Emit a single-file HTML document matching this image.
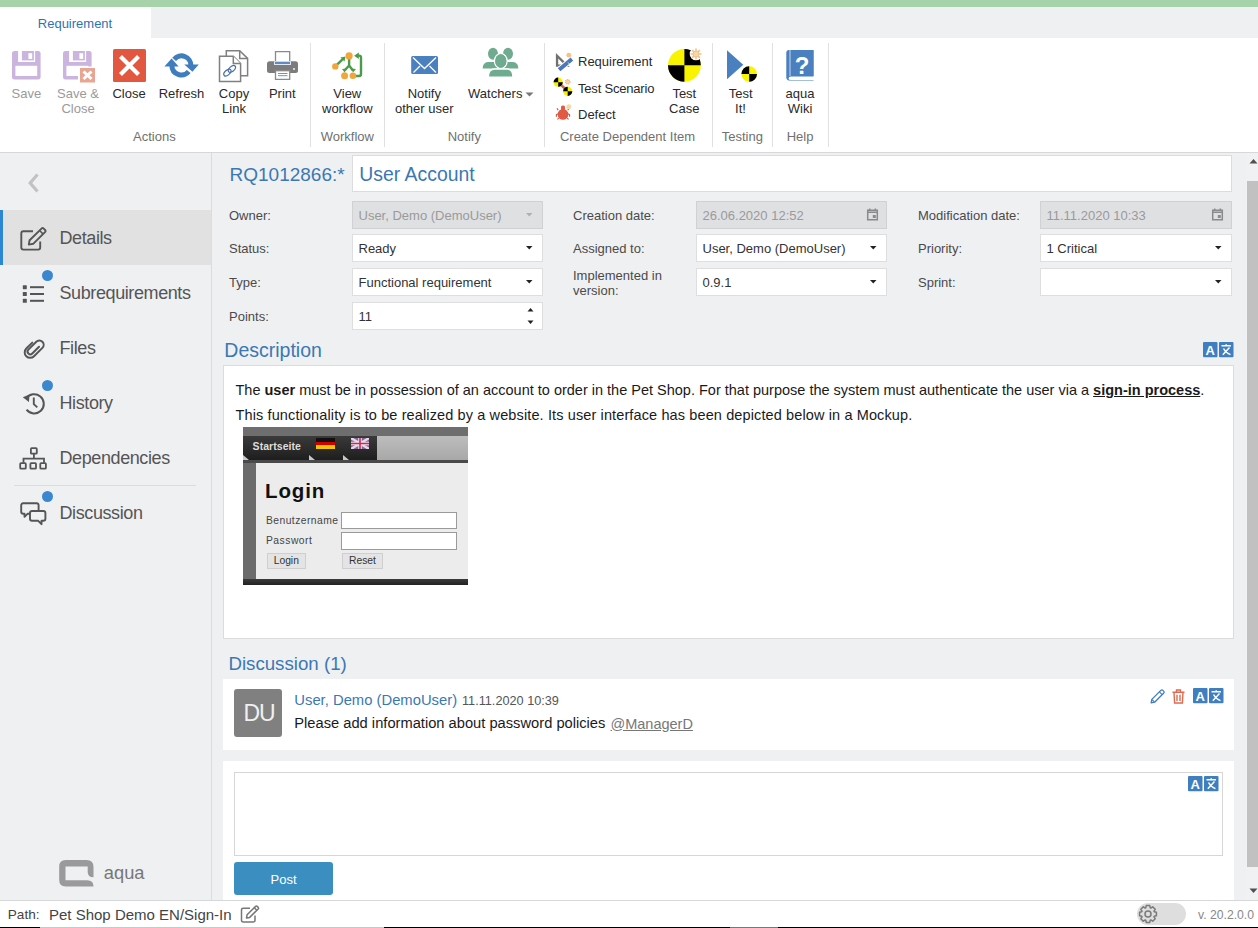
<!DOCTYPE html>
<html><head><meta charset="utf-8"><style>
html,body{margin:0;padding:0;width:1258px;height:928px;overflow:hidden;background:#fff;}
body{position:relative;font-family:"Liberation Sans", sans-serif;}
.t{position:absolute;white-space:nowrap;line-height:1;}
.b{position:absolute;}
</style></head><body>
<div class="b" style="left:0px;top:0px;width:1258px;height:7px;background:#a6d3a9;"></div>
<div class="b" style="left:0px;top:7px;width:1258px;height:31px;background:#eff0f2;"></div>
<div class="b" style="left:0px;top:7px;width:151px;height:31px;background:#ffffff;"></div>
<div class="t" style="top:17.00px;font-size:13px;color:#2f72b0;left:-75.00px;width:300px;text-align:center;">Requirement</div>
<div class="b" style="left:0px;top:38px;width:1258px;height:114px;background:#ffffff;"></div>
<div class="b" style="left:0px;top:152px;width:1258px;height:1px;background:#d6d7d9;"></div>
<div class="b" style="left:310px;top:43px;width:1px;height:104px;background:#e1e1e1;"></div>
<div class="b" style="left:384px;top:43px;width:1px;height:104px;background:#e1e1e1;"></div>
<div class="b" style="left:544px;top:43px;width:1px;height:104px;background:#e1e1e1;"></div>
<div class="b" style="left:712px;top:43px;width:1px;height:104px;background:#e1e1e1;"></div>
<div class="b" style="left:772px;top:43px;width:1px;height:104px;background:#e1e1e1;"></div>
<div class="b" style="left:828px;top:43px;width:1px;height:104px;background:#e1e1e1;"></div>
<div class="t" style="top:86.80px;font-size:13px;color:#9a9a9a;left:-123.60px;width:300px;text-align:center;">Save</div>
<div class="t" style="top:86.80px;font-size:13px;color:#9a9a9a;left:-72.00px;width:300px;text-align:center;">Save &amp;</div>
<div class="t" style="top:101.50px;font-size:13px;color:#9a9a9a;left:-72.00px;width:300px;text-align:center;">Close</div>
<div class="t" style="top:86.80px;font-size:13px;color:#2a2a2a;left:-21.00px;width:300px;text-align:center;">Close</div>
<div class="t" style="top:86.80px;font-size:13px;color:#2a2a2a;left:31.50px;width:300px;text-align:center;">Refresh</div>
<div class="t" style="top:86.80px;font-size:13px;color:#2a2a2a;left:84.00px;width:300px;text-align:center;">Copy</div>
<div class="t" style="top:101.50px;font-size:13px;color:#2a2a2a;left:84.00px;width:300px;text-align:center;">Link</div>
<div class="t" style="top:86.80px;font-size:13px;color:#2a2a2a;left:132.30px;width:300px;text-align:center;">Print</div>
<div class="t" style="top:86.80px;font-size:13px;color:#2a2a2a;left:197.30px;width:300px;text-align:center;">View</div>
<div class="t" style="top:101.50px;font-size:13px;color:#2a2a2a;left:197.30px;width:300px;text-align:center;">workflow</div>
<div class="t" style="top:86.80px;font-size:13px;color:#2a2a2a;left:274.30px;width:300px;text-align:center;">Notify</div>
<div class="t" style="top:101.50px;font-size:13px;color:#2a2a2a;left:274.30px;width:300px;text-align:center;">other user</div>
<div class="t" style="top:86.80px;font-size:13px;color:#2a2a2a;left:468.00px;">Watchers</div>
<div class="t" style="top:54.80px;font-size:13px;color:#2a2a2a;left:578.00px;">Requirement</div>
<div class="t" style="top:81.50px;font-size:13px;color:#2a2a2a;letter-spacing:-0.2px;left:578.00px;">Test Scenario</div>
<div class="t" style="top:107.70px;font-size:13px;color:#2a2a2a;left:578.00px;">Defect</div>
<div class="t" style="top:86.80px;font-size:13px;color:#2a2a2a;left:534.30px;width:300px;text-align:center;">Test</div>
<div class="t" style="top:101.50px;font-size:13px;color:#2a2a2a;left:534.30px;width:300px;text-align:center;">Case</div>
<div class="t" style="top:86.80px;font-size:13px;color:#2a2a2a;left:590.70px;width:300px;text-align:center;">Test</div>
<div class="t" style="top:101.50px;font-size:13px;color:#2a2a2a;left:590.50px;width:300px;text-align:center;">It!</div>
<div class="t" style="top:86.80px;font-size:13px;color:#2a2a2a;left:650.00px;width:300px;text-align:center;">aqua</div>
<div class="t" style="top:101.50px;font-size:13px;color:#2a2a2a;left:650.00px;width:300px;text-align:center;">Wiki</div>
<div class="t" style="top:129.50px;font-size:13px;color:#707070;left:4.40px;width:300px;text-align:center;">Actions</div>
<div class="t" style="top:129.50px;font-size:13px;color:#707070;left:197.30px;width:300px;text-align:center;">Workflow</div>
<div class="t" style="top:129.50px;font-size:13px;color:#707070;left:314.30px;width:300px;text-align:center;">Notify</div>
<div class="t" style="top:129.50px;font-size:13px;color:#707070;left:477.50px;width:300px;text-align:center;">Create Dependent Item</div>
<div class="t" style="top:129.50px;font-size:13px;color:#707070;left:592.30px;width:300px;text-align:center;">Testing</div>
<div class="t" style="top:129.50px;font-size:13px;color:#707070;left:650.00px;width:300px;text-align:center;">Help</div>
<svg class="b" style="left:12px;top:51px;" width="29" height="29" viewBox="0 0 29 29"><rect x="0" y="0" width="28.6" height="28.6" rx="2.5" fill="#cbb4de"/><rect x="6.1" y="0" width="17" height="11" fill="#fff"/><rect x="9.9" y="0" width="12" height="9.4" fill="#cbb4de"/><rect x="16.4" y="2.2" width="3.8" height="5.7" fill="#fff"/><rect x="3.4" y="14.8" width="21.8" height="10.2" fill="#fff"/></svg>
<svg class="b" style="left:63px;top:51px;" width="33" height="32" viewBox="0 0 33 32"><rect x="0" y="0" width="28.6" height="28.6" rx="2.5" fill="#cbb4de"/><rect x="6.1" y="0" width="17" height="11" fill="#fff"/><rect x="9.9" y="0" width="12" height="9.4" fill="#cbb4de"/><rect x="16.4" y="2.2" width="3.8" height="5.7" fill="#fff"/><rect x="3.4" y="14.8" width="21.8" height="10.2" fill="#fff"/><rect x="15" y="15.5" width="18" height="17" fill="#fff"/><rect x="17" y="17" width="15" height="14.5" fill="#e9a592"/><path d="M20.5 20.5L28.5 28M28.5 20.5L20.5 28" stroke="#fff" stroke-width="3"/></svg>
<svg class="b" style="left:113px;top:49px;" width="33" height="33" viewBox="0 0 33 33"><rect x="0" y="0" width="33" height="33" rx="1.5" fill="#e2573f"/><path d="M7.5 7.5L25.5 25.5M25.5 7.5L7.5 25.5" stroke="#fff" stroke-width="4.2"/></svg>
<svg class="b" style="left:164px;top:53px;" width="35" height="25" viewBox="0 0 35 25"><path d="M10.1 6.3 A9.5 9.5 0 0 1 26.9 12.6" fill="none" stroke="#3f7dbf" stroke-width="5"/><path d="M20.3 11.6H34.8L28.4 18.8Z" fill="#3f7dbf"/><path d="M24.7 18.5 A9.5 9.5 0 0 1 7.9 12.4" fill="none" stroke="#3f7dbf" stroke-width="5"/><path d="M0.4 13.5H14.6L7.6 5.6Z" fill="#3f7dbf"/></svg>
<svg class="b" style="left:218px;top:50px;" width="31" height="33" viewBox="0 0 31 33"><path d="M8.3 0.75H21.7L29.6 8.4V25.7H8.3Z" fill="#fff" stroke="#808080" stroke-width="1.5"/><path d="M21.7 0.75V8.4H29.6" fill="none" stroke="#808080" stroke-width="1.5"/><path d="M1.5 6.3H15.3L22.6 13.5V31.4H1.5Z" fill="#fff" stroke="#808080" stroke-width="1.5"/><path d="M15.3 6.3V13.5H22.6" fill="#fff" stroke="#808080" stroke-width="1.5"/><g fill="none" stroke="#4a6fa8" stroke-width="1.2"><ellipse cx="9.4" cy="22.6" rx="4.3" ry="2.4" transform="rotate(-42 9.4 22.6)"/><ellipse cx="13.9" cy="18.9" rx="4.3" ry="2.4" transform="rotate(-42 13.9 18.9)"/></g></svg>
<svg class="b" style="left:267px;top:51px;" width="31" height="29" viewBox="0 0 31 29"><rect x="8.5" y="0.6" width="14.2" height="11.5" fill="#fff" stroke="#8a8a8a" stroke-width="1.3"/><rect x="0" y="10.2" width="31" height="11.8" rx="2.5" fill="#7c7c7c"/><rect x="7" y="10.2" width="17" height="3.8" fill="#dfe8f3"/><rect x="8" y="11.2" width="15" height="1.6" fill="#3f75b5"/><circle cx="27" cy="18" r="0.9" fill="#fff"/><rect x="8.5" y="19.7" width="14.2" height="8.7" fill="#fff" stroke="#8a8a8a" stroke-width="1.3"/><path d="M11 22.5H20.5M11 24.7H20.5" stroke="#6b93c8" stroke-width="1"/></svg>
<svg class="b" style="left:330px;top:51px;" width="34" height="30" viewBox="0 0 34 30"><g stroke="#4c9a4c" stroke-width="2.4" fill="none"><path d="M5.3 15.4L13 7.8"/><path d="M19.1 8V14.5L14.6 19.5M19.1 14.5L22.9 19.5"/><path d="M27 4.6H29Q31 4.6 31 6.6V23Q31 25 29 25H25"/></g><g fill="#4c9a4c"><path d="M10.5 6.5L15.5 5.5L14.5 10.5Z"/><path d="M12 18L16.8 17.5L14.6 21.5Z"/><path d="M21.2 17.5L26 18L23 21.5Z"/><path d="M24.1 4.8L28.8 1.6V8Z"/></g><g fill="#f2a53a"><circle cx="19.1" cy="4.9" r="3.6"/><circle cx="5.3" cy="15.4" r="3.2"/><circle cx="14.6" cy="24.7" r="3.5"/><circle cx="22.9" cy="24.7" r="3.3"/></g></svg>
<svg class="b" style="left:411px;top:55px;" width="28" height="20" viewBox="0 0 28 20"><rect x="0.2" y="0.9" width="26.8" height="18.1" rx="1.5" fill="#4a7fc0"/><path d="M2 2.5L13.5 13.5L25 2.5M2.5 17.5L9 11M25 17.5L18.5 11" fill="none" stroke="#fff" stroke-width="1.3"/></svg>
<svg class="b" style="left:482px;top:47px;" width="37" height="31" viewBox="0 0 37 31"><g fill="#6fab8f"><ellipse cx="11" cy="6.8" rx="5" ry="6"/><ellipse cx="26" cy="6.8" rx="5" ry="6"/><path d="M0.7 21.5Q0.7 15.5 6 15H16Q19 15.5 19 21.5Z"/><path d="M18 21.5Q18 15.5 21 15H31Q36.3 15.5 36.3 21.5Z"/></g><g fill="#6fab8f" stroke="#fff" stroke-width="1.4"><ellipse cx="18.8" cy="14" rx="6.3" ry="7.4"/><path d="M6.3 30.3Q6.3 22.5 12 22H25.5Q31 22.5 31 30.3Z"/></g><ellipse cx="18.8" cy="14" rx="5.6" ry="6.7" fill="#6fab8f"/></svg>
<svg class="b" style="left:525px;top:92px;" width="9" height="5" viewBox="0 0 9 5"><path d="M0.5 0.5H8.5L4.5 4.5Z" fill="#777"/></svg>
<svg class="b" style="left:555px;top:52px;" width="18" height="19" viewBox="0 0 18 19"><path d="M0.9 1.1V14.8H14.8Z M3.2 6.6V12.6H9.2Z" fill="#707070" fill-rule="evenodd"/><path d="M4.1 17.7L16.9 7.1" stroke="#fff" stroke-width="6"/><path d="M4.1 17.7L16.9 7.1" stroke="#4a78b8" stroke-width="4"/><path d="M13 10.4L14.4 12" stroke="#cfe0f2" stroke-width="1"/><circle cx="13.8" cy="3.2" r="2.4" fill="#f5c282"/></svg>
<svg class="b" style="left:553px;top:77px;" width="20" height="20" viewBox="0 0 20 20"><path d="M6.5 6.5L14 13.5" stroke="#d96060" stroke-width="2.5"/><g><circle cx="5.2" cy="5.2" r="4.6" fill="#f5f000"/><path d="M5.2 5.2V0.6A4.6 4.6 0 0 0 0.6 5.2Z M5.2 5.2V9.8A4.6 4.6 0 0 0 9.8 5.2Z" fill="#000"/></g><g><circle cx="14.7" cy="14.3" r="4.6" fill="#f5f000"/><path d="M14.7 14.3V9.7A4.6 4.6 0 0 0 10.1 14.3Z M14.7 14.3V18.9A4.6 4.6 0 0 0 19.3 14.3Z" fill="#000"/></g><circle cx="14.7" cy="4.8" r="2.2" fill="#f7d7a8" stroke="#f2b070" stroke-width="1.3" stroke-dasharray="1 0.7"/></svg>
<svg class="b" style="left:554px;top:104px;" width="18" height="17" viewBox="0 0 18 17"><g fill="#e05a44"><ellipse cx="9" cy="10.4" rx="5.3" ry="5.4"/><rect x="7" y="1.6" width="4" height="5" rx="1.5"/></g><g stroke="#c05040" stroke-width="1.1" fill="none"><path d="M4.2 6.2L3 4.2M13.8 6.2L15 4.2M3.8 9.8L2.4 10.8V12.8M14.2 9.8L15.6 10.8V12.8M4.6 14L3.6 15.5M13.4 14L14.4 15.5"/></g><circle cx="14.8" cy="2.8" r="2.5" fill="#f7d8a8"/></svg>
<svg class="b" style="left:667px;top:48px;" width="36" height="35" viewBox="0 0 36 35"><circle cx="17.4" cy="17.3" r="16.4" fill="#f8f400"/><path d="M17.4 17.3V0.9A16.4 16.4 0 0 1 33.8 17.3Z M17.4 17.3V33.7A16.4 16.4 0 0 1 1 17.3Z" fill="#000"/><circle cx="29" cy="6" r="6.3" fill="#fff"/><g stroke="#f2c28a" stroke-width="1.6"><path d="M29 0.5V11.5M23.5 6H34.5M25.1 2.1L32.9 9.9M32.9 2.1L25.1 9.9"/></g><circle cx="29" cy="6" r="3" fill="#f7d5a8" stroke="#f2c28a" stroke-width="1"/></svg>
<svg class="b" style="left:726px;top:50px;" width="32" height="33" viewBox="0 0 32 33"><path d="M1 0.3L17.3 14.8L1 29.3Z" fill="#4a7fc0"/><circle cx="23.2" cy="24" r="7.8" fill="#f8f400"/><path d="M23.2 24V16.2A7.8 7.8 0 0 0 15.4 24Z M23.2 24V31.8A7.8 7.8 0 0 0 31 24Z" fill="#000"/></svg>
<svg class="b" style="left:786px;top:49px;" width="28" height="32" viewBox="0 0 28 32"><path d="M2.5 1H27.5V27.5H5Q2.5 27.5 2.5 29.5Q2.5 31 5 31H27.5V31.6H4.5Q0.3 31.6 0.3 28.5V3.5Q0.3 1 2.5 1Z" fill="#4a7fc0"/><rect x="4.5" y="1" width="23" height="26" fill="#4a7fc0"/><rect x="3.5" y="1" width="1" height="26" fill="#fff" opacity="0.7"/><text x="16" y="24.5" font-family="Liberation Sans" font-weight="bold" font-size="24" fill="#fff" text-anchor="middle">?</text></svg>
<div class="b" style="left:0px;top:153px;width:211px;height:747px;background:#eff0f2;"></div>
<div class="b" style="left:211px;top:153px;width:1px;height:747px;background:#dcdcde;"></div>
<div class="b" style="left:0px;top:210px;width:211px;height:55px;background:#e1e1e1;"></div>
<div class="b" style="left:0px;top:210px;width:3px;height:55px;background:#2b87d3;"></div>
<div class="t" style="top:228.76px;font-size:18px;color:#555;letter-spacing:-0.4px;left:59.50px;">Details</div>
<div class="t" style="top:283.76px;font-size:18px;color:#555;letter-spacing:-0.4px;left:59.50px;">Subrequirements</div>
<div class="t" style="top:338.76px;font-size:18px;color:#555;letter-spacing:-0.4px;left:59.50px;">Files</div>
<div class="t" style="top:393.76px;font-size:18px;color:#555;letter-spacing:-0.4px;left:59.50px;">History</div>
<div class="t" style="top:448.76px;font-size:18px;color:#555;letter-spacing:-0.4px;left:59.50px;">Dependencies</div>
<div class="t" style="top:503.76px;font-size:18px;color:#555;letter-spacing:-0.4px;left:59.50px;">Discussion</div>
<div class="b" style="left:14px;top:485px;width:182px;height:1px;background:#dcdcdc;"></div>
<div class="b" style="left:42px;top:270.0px;width:11px;height:11px;background:#3a87d0;border-radius:6px;"></div>
<div class="b" style="left:42px;top:380.0px;width:11px;height:11px;background:#3a87d0;border-radius:6px;"></div>
<div class="b" style="left:42px;top:490.5px;width:11px;height:11px;background:#3a87d0;border-radius:6px;"></div>
<svg class="b" style="left:20px;top:227px;" width="27" height="24" viewBox="0 0 27 24"><path d="M13 4.2H3.3Q1.3 4.2 1.3 6.2V20.6Q1.3 22.6 3.3 22.6H18.2Q20.2 22.6 20.2 20.6V14.5" fill="none" stroke="#555" stroke-width="1.9"/><path d="M8.8 17.6L9.6 13.2L21.5 1.6Q22.6 0.6 23.7 1.6L25.1 3Q26 4 25 5.1L13.2 16.8Z" fill="none" stroke="#555" stroke-width="1.9" stroke-linejoin="round"/><path d="M19.6 3.5L23.2 7.1" stroke="#555" stroke-width="1.6"/></svg>
<svg class="b" style="left:22px;top:285px;" width="23" height="18" viewBox="0 0 23 18"><g fill="#555"><rect x="0.8" y="0.2" width="4" height="4" rx="0.6"/><rect x="0.8" y="7" width="4" height="4" rx="0.6"/><rect x="0.8" y="13.8" width="4" height="4" rx="0.6"/><rect x="8" y="1.2" width="14" height="2"/><rect x="8" y="8" width="14" height="2"/><rect x="8" y="14.8" width="14" height="2"/></g></svg>
<svg class="b" style="left:22px;top:336px;" width="24" height="25" viewBox="0 0 24 25"><g transform="translate(12 12.5) rotate(45) scale(0.9) translate(-6 -12.3)"><path d="M8.6 7V17.6A3.05 3.05 0 0 1 2.5 17.6V5.2A4.8 4.8 0 0 1 12.1 5.2V18.4A6.05 6.05 0 0 1 0 18.4V9" fill="none" stroke="#555" stroke-width="2.2" stroke-linecap="round"/></g></svg>
<svg class="b" style="left:22px;top:392px;" width="24" height="24" viewBox="0 0 24 24"><path d="M4.2 6.5A9.6 9.6 0 1 1 4.6 17.7" fill="none" stroke="#555" stroke-width="2"/><path d="M0.8 5.3L7.6 2.6L6.9 10.1Z" fill="#555"/><path d="M11.8 5.5V12.2L15.3 15.4" fill="none" stroke="#555" stroke-width="1.9"/></svg>
<svg class="b" style="left:19px;top:447px;" width="29" height="24" viewBox="0 0 29 24"><g fill="none" stroke="#555" stroke-width="1.8"><rect x="11.9" y="1.2" width="5.9" height="5.5" rx="0.8"/><path d="M14.9 6.7V11.7M4.5 15.7V11.7H25V15.7"/><rect x="1.2" y="16.2" width="5.6" height="5.5" rx="0.8"/><rect x="11.4" y="16.2" width="5.6" height="5.5" rx="0.8"/><rect x="21.3" y="16.2" width="5.6" height="5.5" rx="0.8"/></g></svg>
<svg class="b" style="left:20px;top:502px;" width="27" height="24" viewBox="0 0 27 24"><g fill="none" stroke="#555" stroke-width="1.9" stroke-linejoin="round"><path d="M3.2 1.3H16.6Q18.6 1.3 18.6 3.3V9.8Q18.6 11.8 16.6 11.8H7.5L4.5 14.8V11.8H3.2Q1.2 11.8 1.2 9.8V3.3Q1.2 1.3 3.2 1.3Z" fill="#eff0f2"/><path d="M12 9H23.4Q25.4 9 25.4 11V16.8Q25.4 18.8 23.4 18.8H21.5V22.2L18.2 18.8H12Q10 18.8 10 16.8V11Q10 9 12 9Z" fill="#eff0f2"/></g></svg>
<svg class="b" style="left:26px;top:172px;" width="15" height="22" viewBox="0 0 15 22"><path d="M11.5 2.5L4.2 11L11.5 19.5" fill="none" stroke="#c2c2c2" stroke-width="3.2"/></svg>
<svg class="b" style="left:58px;top:859px;" width="37" height="29" viewBox="0 0 37 29"><path d="M1.2 7.5Q1.2 1 7.7 1H28.5Q35.5 1 35.5 8V18.3L35.5 18.3Q29.7 18.3 29.7 13V7.6H7.5V21.2H29.2Q35.5 21.2 35.5 27.5H7.7Q1.2 27.5 1.2 21Z" fill="#9a9a9c"/></svg>
<div class="t" style="top:864.01px;font-size:18.3px;color:#777;left:103.80px;">aqua</div>
<div class="b" style="left:212px;top:153px;width:1034px;height:747px;background:#eff0f2;"></div>
<div class="t" style="top:164.72px;font-size:19px;color:#3b78b3;left:229.50px;">RQ1012866:*</div>
<div class="b" style="left:352px;top:155px;width:880px;height:37px;background:#ffffff;border:1px solid #dcdcdc;box-sizing:border-box;"></div>
<div class="t" style="top:164.58px;font-size:19.4px;color:#3b78b3;left:359.30px;">User Account</div>
<div class="t" style="top:209.20px;font-size:13px;color:#4a4a4a;left:229.00px;">Owner:</div>
<div class="t" style="top:242.20px;font-size:13px;color:#4a4a4a;left:229.00px;">Status:</div>
<div class="t" style="top:276.00px;font-size:13px;color:#4a4a4a;left:229.00px;">Type:</div>
<div class="t" style="top:309.80px;font-size:13px;color:#4a4a4a;left:229.00px;">Points:</div>
<div class="t" style="top:209.20px;font-size:13px;color:#4a4a4a;left:573.00px;">Creation date:</div>
<div class="t" style="top:242.20px;font-size:13px;color:#4a4a4a;left:573.00px;">Assigned to:</div>
<div class="t" style="top:269.00px;font-size:13px;color:#4a4a4a;left:573.00px;">Implemented in</div>
<div class="t" style="top:283.70px;font-size:13px;color:#4a4a4a;left:573.00px;">version:</div>
<div class="t" style="top:209.20px;font-size:13px;color:#4a4a4a;left:918.00px;">Modification date:</div>
<div class="t" style="top:242.20px;font-size:13px;color:#4a4a4a;left:918.00px;">Priority:</div>
<div class="t" style="top:276.00px;font-size:13px;color:#4a4a4a;left:918.00px;">Sprint:</div>
<div class="b" style="left:352px;top:201px;width:191px;height:28px;background:#dfe0e2;border:1px solid #d0d1d3;box-sizing:border-box;"></div>
<div class="t" style="top:209.00px;font-size:13px;color:#9a9a9a;left:358.50px;">User, Demo (DemoUser)</div>
<svg class="b" style="left:526px;top:213px;" width="7" height="4" viewBox="0 0 7 4"><path d="M0 0H6.5L3.25 3.5Z" fill="#b0b0b0"/></svg>
<div class="b" style="left:352px;top:234px;width:191px;height:28px;background:#ffffff;border:1px solid #dedede;box-sizing:border-box;"></div>
<div class="t" style="top:242.00px;font-size:13px;color:#333;left:358.50px;">Ready</div>
<svg class="b" style="left:526px;top:246px;" width="7" height="4" viewBox="0 0 7 4"><path d="M0 0H6.5L3.25 3.5Z" fill="#222"/></svg>
<div class="b" style="left:352px;top:268px;width:191px;height:28px;background:#ffffff;border:1px solid #dedede;box-sizing:border-box;"></div>
<div class="t" style="top:276.00px;font-size:13px;color:#333;left:358.50px;">Functional requirement</div>
<svg class="b" style="left:526px;top:280px;" width="7" height="4" viewBox="0 0 7 4"><path d="M0 0H6.5L3.25 3.5Z" fill="#222"/></svg>
<div class="b" style="left:352px;top:302px;width:191px;height:28px;background:#ffffff;border:1px solid #dedede;box-sizing:border-box;"></div>
<div class="t" style="top:310.00px;font-size:13px;color:#333;left:358.50px;">11</div>
<svg class="b" style="left:527px;top:307px;" width="8" height="18" viewBox="0 0 8 18"><path d="M0.5 4.5H6.5L3.5 1Z M0.5 13.5H6.5L3.5 17Z" fill="#222"/></svg>
<div class="b" style="left:696px;top:201px;width:191px;height:28px;background:#dfe0e2;border:1px solid #d0d1d3;box-sizing:border-box;"></div>
<div class="t" style="top:209.00px;font-size:13px;color:#9a9a9a;left:702.50px;">26.06.2020 12:52</div>
<svg class="b" style="left:866px;top:207px;" width="13" height="14" viewBox="0 0 13 14"><path d="M1.7 3.2h9.6v9.6h-9.6z M1.7 5.2h9.6" fill="none" stroke="#8a8a8a" stroke-width="1.5"/><rect x="6.8" y="8" width="3" height="3" fill="#8a8a8a"/><path d="M3.7 1.5v2.5M9.3 1.5v2.5" stroke="#8a8a8a" stroke-width="1.5"/></svg>
<div class="b" style="left:696px;top:234px;width:191px;height:28px;background:#ffffff;border:1px solid #dedede;box-sizing:border-box;"></div>
<div class="t" style="top:242.00px;font-size:13px;color:#333;left:702.50px;">User, Demo (DemoUser)</div>
<svg class="b" style="left:870px;top:246px;" width="7" height="4" viewBox="0 0 7 4"><path d="M0 0H6.5L3.25 3.5Z" fill="#222"/></svg>
<div class="b" style="left:696px;top:268px;width:191px;height:28px;background:#ffffff;border:1px solid #dedede;box-sizing:border-box;"></div>
<div class="t" style="top:276.00px;font-size:13px;color:#333;left:702.50px;">0.9.1</div>
<svg class="b" style="left:870px;top:280px;" width="7" height="4" viewBox="0 0 7 4"><path d="M0 0H6.5L3.25 3.5Z" fill="#222"/></svg>
<div class="b" style="left:1040px;top:201px;width:192px;height:28px;background:#dfe0e2;border:1px solid #d0d1d3;box-sizing:border-box;"></div>
<div class="t" style="top:209.00px;font-size:13px;color:#9a9a9a;left:1046.50px;">11.11.2020 10:33</div>
<svg class="b" style="left:1211px;top:207px;" width="13" height="14" viewBox="0 0 13 14"><path d="M1.7 3.2h9.6v9.6h-9.6z M1.7 5.2h9.6" fill="none" stroke="#8a8a8a" stroke-width="1.5"/><rect x="6.8" y="8" width="3" height="3" fill="#8a8a8a"/><path d="M3.7 1.5v2.5M9.3 1.5v2.5" stroke="#8a8a8a" stroke-width="1.5"/></svg>
<div class="b" style="left:1040px;top:234px;width:192px;height:28px;background:#ffffff;border:1px solid #dedede;box-sizing:border-box;"></div>
<div class="t" style="top:242.00px;font-size:13px;color:#333;left:1046.50px;">1 Critical</div>
<svg class="b" style="left:1215px;top:246px;" width="7" height="4" viewBox="0 0 7 4"><path d="M0 0H6.5L3.25 3.5Z" fill="#222"/></svg>
<div class="b" style="left:1040px;top:268px;width:192px;height:28px;background:#ffffff;border:1px solid #dedede;box-sizing:border-box;"></div>
<svg class="b" style="left:1215px;top:280px;" width="7" height="4" viewBox="0 0 7 4"><path d="M0 0H6.5L3.25 3.5Z" fill="#222"/></svg>
<div class="t" style="top:341.39px;font-size:19.5px;color:#3b78b3;left:224.30px;">Description</div>
<svg class="b" style="left:1203px;top:342px;" width="31" height="16" viewBox="0 0 31 16"><rect x="0" y="0" width="14.5" height="15.2" rx="1" fill="#3f7fbf"/><rect x="16" y="0" width="14.5" height="15.2" rx="1" fill="#3f7fbf"/><text x="7.3" y="12.6" font-family="Liberation Sans" font-weight="bold" font-size="13" fill="#fff" text-anchor="middle">A</text><g stroke="#fff" stroke-width="1.5" fill="none"><path d="M18.5 3.8H28M23.2 2.2V3.8M19.8 12.7L26.5 5.5M20.5 6.5Q23 11 27.5 12.6"/></g></svg>
<div class="b" style="left:223px;top:365px;width:1011px;height:274px;background:#ffffff;border:1px solid #dcdcdc;box-sizing:border-box;"></div>
<div class="t" style="left:235.5px;top:383.43px;font-size:14.5px;color:#1a1a1a;white-space:nowrap">The <b>user</b> must be in possession of an account to order in the Pet Shop. For that purpose the system must authenticate the user via a <b style="text-decoration:underline">sign-in process</b>.</div>
<div class="t" style="left:235.5px;top:408.03px;font-size:14.5px;color:#1a1a1a;white-space:nowrap;letter-spacing:0.12px">This functionality is to be realized by a website. Its user interface has been depicted below in a Mockup.</div>
<div class="b" style="left:243px;top:427px;width:225px;height:158px;background:#ececec;overflow:hidden"><div class="b" style="left:0;top:0;width:225px;height:9px;background:#6e6e6e"></div><div class="b" style="left:0;top:9px;width:134px;height:24px;background:linear-gradient(#3a3a3a,#1e1e1e)"></div><div class="b" style="left:134px;top:9px;width:91px;height:24px;background:linear-gradient(#bdbdbd,#a8a8a8)"></div><div class="b" style="left:0;top:33px;width:225px;height:3px;background:#4a4a4a"></div><div class="b" style="left:0;top:36px;width:13px;height:122px;background:#6b6b6b"></div><div class="b" style="left:0;top:152px;width:225px;height:6px;background:linear-gradient(#3a3a3a,#222)"></div><div class="b" style="left:73px;top:11px;width:19px;height:11px;background:linear-gradient(#111 0,#111 33%,#d40000 33%,#d40000 66%,#f5c400 66%)"></div><div class="b" style="left:108px;top:11px;width:18px;height:11px;background:#7a6a9a"></div><svg class="b" style="left:108px;top:11px" width="18" height="11"><path d="M0 0L18 11M18 0L0 11" stroke="#e8d8e8" stroke-width="2.4"/><path d="M9 0V11M0 5.5H18" stroke="#f0e0f0" stroke-width="3.5"/><path d="M9 0V11M0 5.5H18" stroke="#c03050" stroke-width="1.6"/></svg><svg class="b" style="left:0;top:27px" width="120" height="6"><path d="M0 1L6 6H0Z M66 1L72 6H66Z M100 1L106 6H100Z" fill="#c8c8c8"/></svg></div>
<div class="t" style="top:440.71px;font-size:10.5px;color:#dddddd;font-weight:bold;letter-spacing:0.05px;left:252.60px;">Startseite</div>
<div class="t" style="top:480.85px;font-size:20.5px;color:#111;font-weight:bold;letter-spacing:0.9px;left:265.00px;">Login</div>
<div class="t" style="top:515.98px;font-size:10.3px;color:#444;letter-spacing:0.45px;left:266.00px;">Benutzername</div>
<div class="t" style="top:535.68px;font-size:10.3px;color:#444;letter-spacing:0.5px;left:266.00px;">Passwort</div>
<div class="b" style="left:341px;top:512px;width:116px;height:17px;background:#fff;border:1px solid #9a9a9a;box-sizing:border-box;"></div>
<div class="b" style="left:341px;top:532px;width:116px;height:18px;background:#fff;border:1px solid #9a9a9a;box-sizing:border-box;"></div>
<div class="b" style="left:267px;top:553px;width:39px;height:16px;background:#e4e4e4;border:1px solid #cfcfcf;box-sizing:border-box;"></div>
<div class="b" style="left:342px;top:553px;width:41px;height:16px;background:#e4e4e4;border:1px solid #cfcfcf;box-sizing:border-box;"></div>
<div class="t" style="top:556.28px;font-size:10.3px;color:#333;left:136.30px;width:300px;text-align:center;">Login</div>
<div class="t" style="top:556.28px;font-size:10.3px;color:#333;left:212.50px;width:300px;text-align:center;">Reset</div>
<div class="t" style="top:655.17px;font-size:18.7px;color:#3b78b3;left:228.40px;">Discussion (1)</div>
<div class="b" style="left:223px;top:679px;width:1011px;height:71px;background:#ffffff;"></div>
<div class="b" style="left:234px;top:689px;width:48px;height:48px;background:#808080;border-radius:3px;"></div>
<div class="t" style="top:701.53px;font-size:23px;color:#f0f0f0;letter-spacing:-1px;left:109.00px;width:300px;text-align:center;">DU</div>
<div class="t" style="top:693.47px;font-size:14.8px;color:#3b78b3;left:294.30px;">User, Demo (DemoUser)</div>
<div class="t" style="top:695.25px;font-size:12.7px;color:#555;left:462.00px;">11.11.2020 10:39</div>
<div class="t" style="top:716.36px;font-size:14.7px;color:#1a1a1a;left:294.30px;">Please add information about password policies</div>
<div class="t" style="top:716.53px;font-size:14.5px;color:#777;left:610.50px;text-decoration:underline;">@ManagerD</div>
<svg class="b" style="left:1150px;top:689px;" width="15" height="15" viewBox="0 0 15 15"><path d="M1.2 13.8L1.8 10.4L10.8 1.4Q11.9 0.4 12.9 1.4L13.6 2.1Q14.6 3.1 13.6 4.2L4.6 13.2Z" fill="none" stroke="#3f7dbf" stroke-width="1.3" stroke-linejoin="round"/><path d="M9.4 2.8L12.2 5.6M2 10.6L4.4 13" stroke="#3f7dbf" stroke-width="1.1"/></svg>
<svg class="b" style="left:1172px;top:689px;" width="13" height="15" viewBox="0 0 13 15"><g fill="none" stroke="#e06a50" stroke-width="1.4"><path d="M0.5 3.2H12.5M4.5 3.2V1H8.5V3.2M2 3.5L2.6 14H10.4L11 3.5M5 5.8V12M8 5.8V12"/></g></svg>
<svg class="b" style="left:1193px;top:688px;" width="31" height="16" viewBox="0 0 31 16"><rect x="0" y="0" width="14.5" height="15.2" rx="1" fill="#3f7fbf"/><rect x="16" y="0" width="14.5" height="15.2" rx="1" fill="#3f7fbf"/><text x="7.3" y="12.6" font-family="Liberation Sans" font-weight="bold" font-size="13" fill="#fff" text-anchor="middle">A</text><g stroke="#fff" stroke-width="1.5" fill="none"><path d="M18.5 3.8H28M23.2 2.2V3.8M19.8 12.7L26.5 5.5M20.5 6.5Q23 11 27.5 12.6"/></g></svg>
<div class="b" style="left:223px;top:761px;width:1011px;height:139px;background:#ffffff;"></div>
<div class="b" style="left:234px;top:772px;width:989px;height:84px;background:#ffffff;border:1px solid #d6d6d6;box-sizing:border-box;"></div>
<svg class="b" style="left:1188px;top:776px;" width="31" height="16" viewBox="0 0 31 16"><rect x="0" y="0" width="14.5" height="15.2" rx="1" fill="#3f7fbf"/><rect x="16" y="0" width="14.5" height="15.2" rx="1" fill="#3f7fbf"/><text x="7.3" y="12.6" font-family="Liberation Sans" font-weight="bold" font-size="13" fill="#fff" text-anchor="middle">A</text><g stroke="#fff" stroke-width="1.5" fill="none"><path d="M18.5 3.8H28M23.2 2.2V3.8M19.8 12.7L26.5 5.5M20.5 6.5Q23 11 27.5 12.6"/></g></svg>
<div class="b" style="left:234px;top:862px;width:99px;height:33px;background:#3a8fc0;border-radius:3px;"></div>
<div class="t" style="top:872.60px;font-size:13px;color:#ffffff;left:133.50px;width:300px;text-align:center;">Post</div>
<div class="b" style="left:1246px;top:153px;width:12px;height:747px;background:#f0f1f3;"></div>
<div class="b" style="left:1247px;top:181px;width:11px;height:686px;background:#c1c1c1;"></div>
<svg class="b" style="left:1249px;top:158px;" width="9" height="6" viewBox="0 0 9 6"><path d="M0.5 5.5H8.5L4.5 1Z" fill="#505050"/></svg>
<svg class="b" style="left:1249px;top:888px;" width="9" height="6" viewBox="0 0 9 6"><path d="M0.5 0.5H8.5L4.5 5Z" fill="#505050"/></svg>
<div class="b" style="left:0px;top:900px;width:1258px;height:28px;background:#ffffff;"></div>
<div class="b" style="left:0px;top:900px;width:1258px;height:1px;background:#d6d7d9;"></div>
<div class="t" style="top:907.99px;font-size:13.6px;color:#444;left:7.80px;">Path:</div>
<div class="t" style="top:906.80px;font-size:15px;color:#444;left:49.00px;">Pet Shop Demo EN/Sign-In</div>
<svg class="b" style="left:240px;top:905px;" width="20" height="18" viewBox="0 0 20 18"><path d="M10 3.3H3.3Q1.5 3.3 1.5 5V15.3Q1.5 17 3.3 17H13.3Q15 17 15 15.3V10.5" fill="none" stroke="#777" stroke-width="1.5"/><path d="M6.5 13L7.1 9.8L15.6 1.4Q16.4 0.7 17.2 1.4L18.2 2.4Q18.9 3.2 18.2 4L9.7 12.4Z" fill="none" stroke="#777" stroke-width="1.5" stroke-linejoin="round"/><path d="M14.3 2.8L16.8 5.3" stroke="#777" stroke-width="1.3"/></svg>
<div class="b" style="left:1137px;top:903px;width:49px;height:22px;background:#dedede;border-radius:11px;"></div>
<svg class="b" style="left:1138px;top:904px;" width="20" height="20" viewBox="0 0 20 20"><path d="M16.21 7.76 L18.42 8.23 L18.42 11.77 L16.21 12.24 L15.97 12.81 L17.20 14.70 L14.70 17.20 L12.81 15.97 L12.24 16.21 L11.77 18.42 L8.23 18.42 L7.76 16.21 L7.19 15.97 L5.30 17.20 L2.80 14.70 L4.03 12.81 L3.79 12.24 L1.58 11.77 L1.58 8.23 L3.79 7.76 L4.03 7.19 L2.80 5.30 L5.30 2.80 L7.19 4.03 L7.76 3.79 L8.23 1.58 L11.77 1.58 L12.24 3.79 L12.81 4.03 L14.70 2.80 L17.20 5.30 L15.97 7.19Z" fill="none" stroke="#7a7a7a" stroke-width="1.5" stroke-linejoin="round"/><circle cx="10" cy="10" r="3" fill="none" stroke="#7a7a7a" stroke-width="1.5"/></svg>
<div class="t" style="top:909.17px;font-size:12.2px;color:#888;left:1198.00px;">v. 20.2.0.0</div>
<div class="b" style="left:0px;top:927px;width:1258px;height:1px;background:#000;"></div>
<div class="b" style="left:40px;top:927px;width:344px;height:1px;background:#c8c8c8;"></div>
<div class="b" style="left:730px;top:927px;width:48px;height:1px;background:#777;"></div>
</body></html>
